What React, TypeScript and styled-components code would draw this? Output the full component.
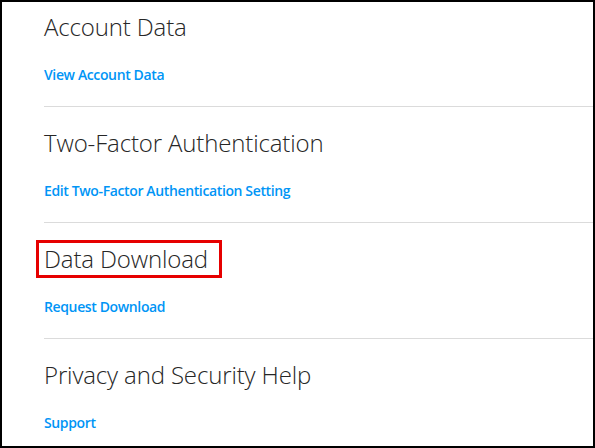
import React from "react";
import styled, { createGlobalStyle } from "styled-components";

const Global = createGlobalStyle`
  html, body { margin: 0; padding: 0; background: #fff; }
  body { font-family: "Open Sans", "Liberation Sans", sans-serif; }
`;

const Frame = styled.div`
  width: 595px;
  height: 448px;
  box-sizing: border-box;
  border: 2px solid #000;
  background: #fff;
  overflow: hidden;
`;

const List = styled.div`
  margin-top: -11px;
  display: flex;
  flex-direction: column;
`;

const Section = styled.section`
  height: 116px;
  box-sizing: border-box;
  padding: 20px 0 0 0;
  margin-left: 42px;
  border-bottom: 1px solid #dbdbdb;
  display: flex;
  flex-direction: column;
  align-items: flex-start;
`;

const Heading = styled.h2<{ $marked?: boolean }>`
  position: relative;
  margin: 0;
  font-size: 24px;
  line-height: 32px;
  font-weight: 300;
  color: #262626;
  letter-spacing: -0.14px;
  &::after {
    content: "";
    display: ${(p) => (p.$marked ? "block" : "none")};
    position: absolute;
    left: -8px;
    right: -14px;
    top: -3px;
    bottom: -3px;
    border: 3px solid #e60000;
  }
`;

const Link = styled.a`
  margin-top: 23px;
  font-size: 14px;
  line-height: 18px;
  font-weight: 600;
  color: #0095f6;
  letter-spacing: -0.37px;
  text-decoration: none;
  cursor: pointer;
`;

const sections = [
  { title: "Account Data", link: "View Account Data" },
  { title: "Two-Factor Authentication", link: "Edit Two-Factor Authentication Setting" },
  { title: "Data Download", link: "Request Download", marked: true },
  { title: "Privacy and Security Help", link: "Support" },
];

export default function App() {
  return (
    <>
      <Global />
      <Frame>
        <List>
          {sections.map((s) => (
            <Section key={s.title}>
              <Heading $marked={s.marked}>{s.title}</Heading>
              <Link>{s.link}</Link>
            </Section>
          ))}
        </List>
      </Frame>
    </>
  );
}
